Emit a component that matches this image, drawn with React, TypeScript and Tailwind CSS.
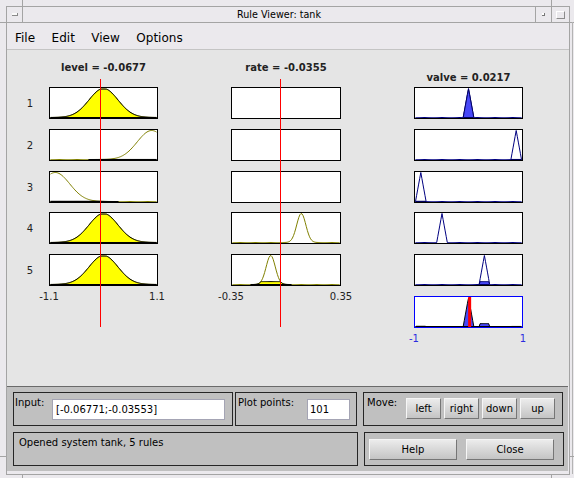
import React from "react";
import clsx from "clsx";

const N = 101;
const H = 30;

type Fn = (x: number) => number;

const gauss = (s: number, c: number): Fn => (x) => Math.exp(-((x - c) ** 2) / (2 * s * s));
const tri = (a: number, b: number, c: number): Fn => (x) =>
  Math.max(0, Math.min((x - a) / (b - a), (c - x) / (c - b)));
const clip = (f: Fn, mu: number): Fn => (x) => Math.min(f(x), mu);

const LEVEL = -0.06771;
const RATE = -0.03553;
const VALVE = 0.0217;

// tank.fis membership functions
const okay = gauss(0.3, 0);
const low = gauss(0.3, 1);
const high = gauss(0.3, -1);
const positive = gauss(0.03, 0.1);
const negative = gauss(0.03, -0.1);

const levelMfs = [okay, low, high, okay, okay];
const rateMfs: (Fn | null)[] = [null, null, null, positive, negative];
const valveMfs = [
  tri(-0.1, 0, 0.1),
  tri(0.8, 0.9, 1),
  tri(-1, -0.9, -0.8),
  tri(-0.6, -0.5, -0.4),
  tri(0.2, 0.3, 0.4),
];

const firing = levelMfs.map((f, i) => {
  const r = rateMfs[i];
  return r ? Math.min(f(LEVEL), r(RATE)) : f(LEVEL);
});

const aggregate: Fn = (x) => Math.max(...valveMfs.map((f, i) => Math.min(f(x), firing[i])));

type Layer =
  | { kind: "line"; f: Fn; color: string }
  | { kind: "patch"; f: Fn; fill: string; stroke: string }
  | { kind: "bar"; x: number; color: string };

function Axes({
  w,
  lo,
  hi,
  layers,
  className,
}: {
  w: number;
  lo: number;
  hi: number;
  layers: Layer[];
  className: string;
}) {
  const W = w - 2;
  const xs = Array.from({ length: N }, (_, i) => lo + ((hi - lo) * i) / (N - 1));
  const px = (x: number) => ((x - lo) / (hi - lo)) * (W - 1) + 0.5;
  const py = (v: number) => 0.5 + (1 - v) * (H - 1);

  return (
    <div className={clsx("h-[32px] bg-white border", className)}>
      <svg width={W} height={H} className="block">
        {layers.map((l, k) => {
          if (l.kind === "line") {
            const d = xs.map((x, i) => `${i ? "L" : "M"}${px(x).toFixed(2)},${py(l.f(x)).toFixed(2)}`).join("");
            return <path key={k} d={d} fill="none" stroke={l.color} strokeWidth={1} />;
          }
          if (l.kind === "patch") {
            const v = xs.map(l.f);
            let a = v.findIndex((y) => y > 1e-4);
            if (a < 0) return null;
            let b = v.length - 1 - [...v].reverse().findIndex((y) => y > 1e-4);
            a = Math.max(0, a - 1);
            b = Math.min(N - 1, b + 1);
            const pts = [`${px(xs[a])},${py(0)}`];
            for (let i = a; i <= b; i++) pts.push(`${px(xs[i]).toFixed(2)},${py(v[i]).toFixed(2)}`);
            pts.push(`${px(xs[b])},${py(0)}`);
            return <polygon key={k} points={pts.join(" ")} fill={l.fill} stroke={l.stroke} strokeWidth={1} />;
          }
          return <rect key={k} x={px(l.x) - 1.5} y={0} width={3} height={H} fill={l.color} />;
        })}
      </svg>
    </div>
  );
}

const GAPS = ["mt-0", "mt-[10px]", "mt-[10px]", "mt-[9px]", "mt-[10px]", "mt-[10px]"];

function RedLine({ left }: { left: string }) {
  return <div className={clsx("absolute top-[29px] h-[248px] w-px bg-[#ff0000]", left)} />;
}

function Button({ label, className }: { label: string; className: string }) {
  return (
    <button
      className={clsx(
        "h-[21px] text-[10px] text-black bg-gradient-to-b from-[#ececec] to-[#c4c4c4] border border-t-[#f6f6f6] border-l-[#f6f6f6] border-b-[#767676] border-r-[#767676]",
        className
      )}
    >
      {label}
    </button>
  );
}

export default function App() {
  return (
    <div
      className="relative w-[574px] h-[478px] bg-[#ebe9ed] pl-[6px] pt-[6px] overflow-hidden text-black"
      style={{ fontFamily: '"DejaVu Sans", sans-serif' }}
    >
      {/* window manager resize marks */}
      <div className="absolute left-[22px] top-0 h-[6px] w-px bg-[#a4a4a4]" />
      <div className="absolute left-[551px] top-0 h-[6px] w-px bg-[#a4a4a4]" />
      <div className="absolute left-0 top-[22px] h-px w-[6px] bg-[#a4a4a4]" />
      <div className="absolute left-[570px] top-[22px] h-px w-[4px] bg-[#a4a4a4]" />
      <div className="absolute left-[572px] top-[22px] h-[452px] w-px bg-[#b4b4b4]" />
      <div className="absolute left-0 top-[456px] h-px w-[6px] bg-[#a4a4a4]" />
      <div className="absolute left-[570px] top-[456px] h-px w-[4px] bg-[#a4a4a4]" />
      <div className="absolute left-[22px] top-[475px] h-[3px] w-px bg-[#a4a4a4]" />
      <div className="absolute left-[551px] top-[475px] h-[3px] w-px bg-[#a4a4a4]" />

      <div className="w-[564px] h-[469px] border border-[#a4a4a4] flex flex-col">
        {/* title bar */}
        <div className="h-[16px] border-b border-[#a4a4a4] flex">
          <div className="w-[16px] border-r border-[#a4a4a4] flex items-center justify-center">
            <div className="w-[6px] h-[3px] bg-[#fafafa] border-b border-r border-[#8a8a8a]" />
          </div>
          <div className="flex-1 flex items-center justify-center text-[9.6px] leading-none">Rule Viewer: tank</div>
          <div className="w-[16px] border-l border-[#a4a4a4] flex items-center justify-center">
            <div className="w-[3px] h-[3px] bg-white border-b border-r border-[#777]" />
          </div>
          <div className="w-[18px] border-l border-[#a4a4a4] flex items-center justify-center">
            <div className="w-[9px] h-[8px] border border-t-white border-l-white border-b-[#8c8c8c] border-r-[#8c8c8c]" />
          </div>
        </div>

        {/* menu bar */}
        <div className="h-[27px] border-b border-[#c4c4c4] flex items-center gap-[16.5px] pl-[8px] pt-[3px] text-[12px]">
          <span>File</span>
          <span>Edit</span>
          <span>View</span>
          <span>Options</span>
        </div>

        {/* rule plots */}
        <div className="h-[336px] bg-[#e5e5e5] flex">
          <div className="w-[17px]" />
          <div className="w-[12px] flex flex-col text-[10px] text-[#222]">
            <div className="h-[37px]" />
            {[1, 2, 3, 4, 5].map((n, i) => (
              <div key={n} className={clsx("h-[32px] flex items-center justify-center", GAPS[i])}>
                {n}
              </div>
            ))}
          </div>

          <div className="w-[13px]" />
          <div className="relative w-[109px] flex flex-col">
            <div className="h-[37px] pt-[12px] text-center text-[10px] leading-[12px] font-bold text-[#222] whitespace-nowrap">
              level = -0.0677
            </div>
            {levelMfs.map((f, i) => (
              <Axes
                key={i}
                w={109}
                lo={-1.1}
                hi={1.1}
                className={clsx("w-[109px] border-black", GAPS[i])}
                layers={[
                  { kind: "line", f, color: "#808000" },
                  { kind: "patch", f: clip(f, f(LEVEL)), fill: "#ffff00", stroke: "#000" },
                ]}
              />
            ))}
            <div className="relative mt-[5px] h-[12px] text-[10px] leading-[12px] text-[#222]">
              <span className="absolute left-0 -translate-x-1/2">-1.1</span>
              <span className="absolute left-[108px] -translate-x-1/2">1.1</span>
            </div>
            <RedLine left="left-[51px]" />
          </div>

          <div className="w-[73px]" />
          <div className="relative w-[110px] flex flex-col">
            <div className="h-[37px] pt-[12px] text-center text-[10px] leading-[12px] font-bold text-[#222] whitespace-nowrap">
              rate = -0.0355
            </div>
            {rateMfs.map((f, i) => (
              <Axes
                key={i}
                w={110}
                lo={-0.35}
                hi={0.35}
                className={clsx("w-[110px] border-black", GAPS[i])}
                layers={
                  f
                    ? [
                        { kind: "line", f, color: "#808000" },
                        { kind: "patch", f: clip(f, f(RATE)), fill: "#ffff00", stroke: "#000" },
                      ]
                    : []
                }
              />
            ))}
            <div className="relative mt-[5px] h-[12px] text-[10px] leading-[12px] text-[#222]">
              <span className="absolute left-0 -translate-x-1/2">-0.35</span>
              <span className="absolute left-[110px] -translate-x-1/2">0.35</span>
            </div>
            <RedLine left="left-[49px]" />
          </div>

          <div className="w-[73px]" />
          <div className="w-[109px] flex flex-col">
            <div className="h-[37px] pt-[22px] text-center text-[10px] leading-[12px] font-bold text-[#222] whitespace-nowrap">
              valve = 0.0217
            </div>
            {valveMfs.map((f, i) => (
              <Axes
                key={i}
                w={109}
                lo={-1}
                hi={1}
                className={clsx("w-[109px] border-black", GAPS[i])}
                layers={[
                  { kind: "line", f, color: "#000080" },
                  { kind: "patch", f: clip(f, firing[i]), fill: "#4848f8", stroke: "#000060" },
                ]}
              />
            ))}
            <Axes
              w={109}
              lo={-1}
              hi={1}
              className={clsx("w-[109px] border-[#0000ff]", GAPS[5])}
              layers={[
                { kind: "patch", f: aggregate, fill: "#4848f8", stroke: "#000" },
                { kind: "bar", x: VALVE, color: "#ff0000" },
              ]}
            />
            <div className="relative mt-[5px] h-[12px] text-[10px] leading-[12px] text-[#2b2bdf]">
              <span className="absolute left-0 -translate-x-1/2">-1</span>
              <span className="absolute left-[109px] -translate-x-1/2">1</span>
            </div>
          </div>
        </div>

        {/* control panel */}
        <div className="h-[85px] mr-[1px] bg-[#c0c0c0] border-t border-[#6a6a6a] pl-[6px] pt-[5px] text-[10px]">
          <div className="flex h-[34px]">
            <div className="w-[220px] border border-[#262626] flex items-start pl-[1px] pt-[4px]">
              <span className="w-[37px] leading-[12px]">Input:</span>
              <div className="w-[173px] h-[21px] mt-[2px] bg-white border border-[#a4a4b4] flex items-center pl-[3px] whitespace-nowrap">
                [-0.06771;-0.03553]
              </div>
            </div>
            <div className="ml-[2px] w-[122px] border border-[#262626] flex items-start pl-[2px] pt-[4px]">
              <span className="w-[69px] leading-[12px] whitespace-nowrap">Plot points:</span>
              <div className="w-[43px] h-[21px] mt-[2px] bg-white border border-[#a4a4b4] flex items-center pl-[2px]">
                101
              </div>
            </div>
            <div className="ml-[6px] w-[200px] border border-[#262626] flex items-start pl-[3px] pt-[4px]">
              <span className="w-[39px] leading-[12px]">Move:</span>
              <div className="flex gap-[3px] mt-[1px]">
                <Button label="left" className="w-[35px]" />
                <Button label="right" className="w-[35px]" />
                <Button label="down" className="w-[35px]" />
                <Button label="up" className="w-[35px]" />
              </div>
            </div>
          </div>
          <div className="flex h-[34px] mt-[6px]">
            <div className="w-[345px] border border-[#262626] pl-[5px] pt-[4px] leading-[12px]">
              Opened system tank, 5 rules
            </div>
            <div className="ml-[6px] w-[200px] border border-[#262626] flex items-start pl-[4px] pt-[6px] gap-[9px]">
              <Button label="Help" className="w-[88px]" />
              <Button label="Close" className="w-[88px]" />
            </div>
          </div>
        </div>
      </div>
    </div>
  );
}
